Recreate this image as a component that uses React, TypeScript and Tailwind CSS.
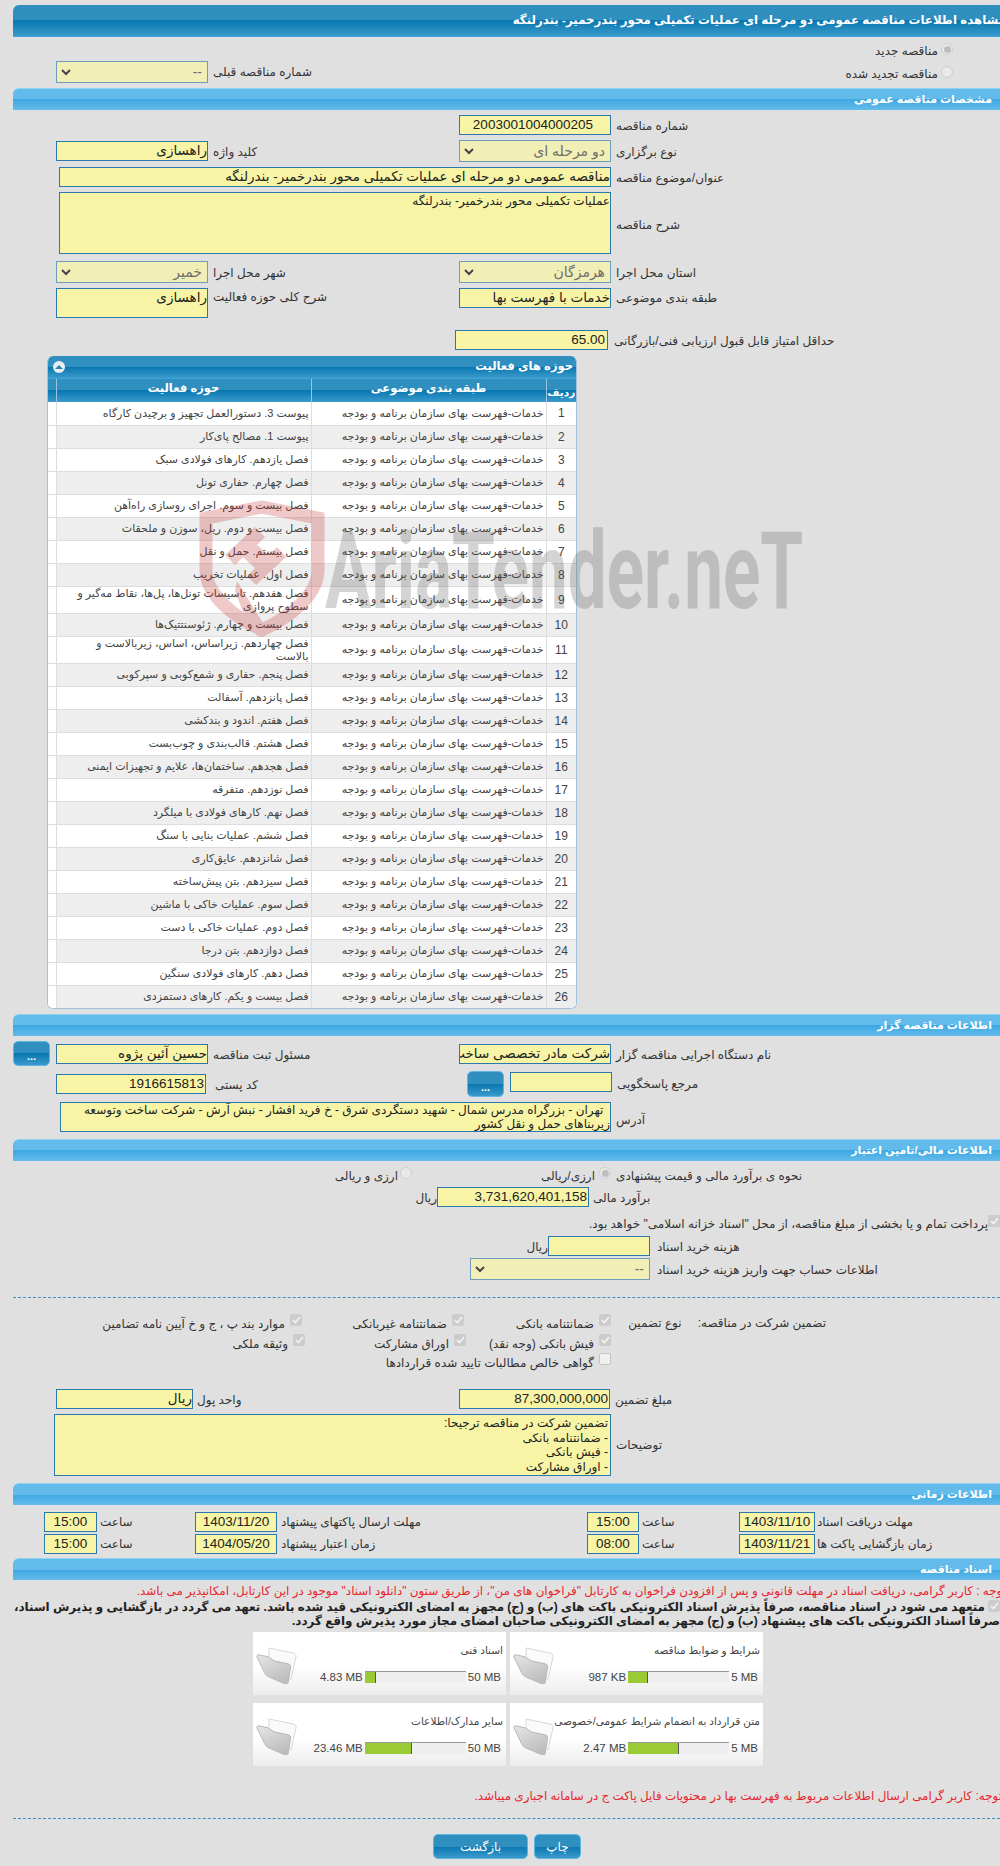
import type { ReactNode } from 'react'

const service = 'خدمات-فهرست بهای سازمان برنامه و بودجه'

const activities = [
  'پیوست 3. دستورالعمل تجهیز و برچیدن کارگاه',
  'پیوست 1. مصالح پای‌کار',
  'فصل یازدهم. کارهای فولادی سبک',
  'فصل چهارم. حفاری تونل',
  'فصل بیست و سوم. اجرای روسازی راه‌آهن',
  'فصل بیست و دوم. ریل، سوزن و ملحقات',
  'فصل بیستم. حمل و نقل',
  'فصل اول. عملیات تخریب',
  'فصل هفدهم. تاسیسات تونل‌ها، پل‌ها، نقاط مه‌گیر و سطوح پروازی',
  'فصل بیست و چهارم. ژئوسنتتیک‌ها',
  'فصل چهاردهم. زیراساس، اساس، زیربالاست  و بالاست',
  'فصل پنجم. حفاری و شمع‌کوبی و سپرکوبی',
  'فصل پانزدهم. آسفالت',
  'فصل هفتم. اندود و بندکشی',
  'فصل هشتم. قالب‌بندی و چوب‌بست',
  'فصل هجدهم. ساختمان‌ها، علایم و تجهیزات ایمنی',
  'فصل نوزدهم. متفرقه',
  'فصل نهم. کارهای فولادی با میلگرد',
  'فصل ششم. عملیات بنایی با سنگ',
  'فصل شانزدهم. عایق‌کاری',
  'فصل سیزدهم. بتن پیش‌ساخته',
  'فصل سوم. عملیات خاکی با ماشین',
  'فصل دوم. عملیات خاکی با دست',
  'فصل دوازدهم. بتن درجا',
  'فصل دهم. کارهای فولادی سنگین',
  'فصل بیست و یکم. کارهای دستمزدی',
]

const files = [
  { name: 'شرایط و ضوابط مناقصه', used: '987 KB', max: '5 MB', pct: 20 },
  { name: 'اسناد فنی', used: '4.83 MB', max: '50 MB', pct: 11 },
  { name: 'متن قرارداد به انضمام شرایط عمومی/خصوصی', used: '2.47 MB', max: '5 MB', pct: 50 },
  { name: 'سایر مدارک/اطلاعات', used: '23.46 MB', max: '50 MB', pct: 47 },
]

function DarkBar({ children, className = '' }: { children?: ReactNode; className?: string }) {
  return (
    <div className={`bg-[linear-gradient(#2f90bf_50%,#0877b0_50%,#3b9acb)] border-b border-[#3fa3dc] font-bold text-white ${className}`}>
      {children}
    </div>
  )
}

function SectionBar({ title, className = '' }: { title: string; className?: string }) {
  return (
    <div dir="rtl" className={`ml-[13px] flex h-[22px] items-center overflow-hidden rounded-tl-[6px] border-t border-[#8fd3f0] bg-[linear-gradient(#62bbea_50%,#3ea8e2_50%,#64bbea)] pr-[8px] text-[11px] font-bold text-white ${className}`}>
      {title}
    </div>
  )
}

function Box({ w, h = 20, children, t = 'whitespace-nowrap text-[13.500px] leading-[18px]', className = '' }: { w: number; h?: number; children?: ReactNode; t?: string; className?: string }) {
  return (
    <div dir="rtl" style={{ width: w, height: h }} className={`shrink-0 overflow-hidden border border-[#2a78ad] bg-[#f7f5a5] text-[#222] ${t} ${className}`}>
      {children}
    </div>
  )
}

function Pick({ w, value, className = '' }: { w: number; value: string; className?: string }) {
  return (
    <div style={{ width: w }} className={`flex h-[22px] shrink-0 items-center justify-between border border-[#6d9cbd] bg-[#f1efb5] pl-[4px] pr-[5px] text-[14px] text-[#6e6e6e] ${className}`}>
      <svg width="10" height="7" viewBox="0 0 10 7" fill="none" stroke="#444" strokeWidth="2">
        <path d="M1 1l4 4 4-4" />
      </svg>
      <span dir="rtl">{value}</span>
    </div>
  )
}

function Label({ children, className = '' }: { children: ReactNode; className?: string }) {
  return (
    <span dir="rtl" className={`whitespace-nowrap text-[12px] text-[#333] ${className}`}>
      {children}
    </span>
  )
}

function Radio({ on }: { on?: boolean }) {
  return (
    <span className="flex h-[12px] w-[12px] shrink-0 items-center justify-center rounded-full border border-[#cfcfcf] bg-[#e9e9e9]">
      {on && <span className="h-[7px] w-[7px] rounded-full bg-[#bdbdbd]" />}
    </span>
  )
}

function Check({ on = true }: { on?: boolean }) {
  return (
    <span className={`flex h-[12px] w-[12px] shrink-0 items-center justify-center rounded-[2px] ${on ? 'bg-[#cccccc]' : 'border border-[#c4c4c4] bg-[#f0f0f0]'}`}>
      {on && (
        <svg width="9" height="8" viewBox="0 0 9 8" fill="none" stroke="#f4f4f4" strokeWidth="1.6">
          <path d="M1 4l2.4 2.6L8 1" />
        </svg>
      )}
    </span>
  )
}

function CheckItem({ label, on, className = '' }: { label: string; on?: boolean; className?: string }) {
  return (
    <div className={`flex items-start gap-[5px] ${className}`}>
      <Check on={on} />
      <Label className="mt-[1px]">{label}</Label>
    </div>
  )
}

function DotsButton({ className = '' }: { className?: string }) {
  return (
    <DarkBar className={`flex w-[37px] items-end justify-center rounded-[5px] border border-[#5db5e6] pb-[3px] text-[11px] leading-none ${className}`}>...</DarkBar>
  )
}

function Folder() {
  return (
    <svg width="42" height="38" viewBox="0 0 42 38" className="mt-[-23px] shrink-0">
      <defs>
        <linearGradient id="flap" x1="0" y1="0" x2="0.6" y2="1">
          <stop offset="0" stopColor="#e6e6e6" />
          <stop offset="1" stopColor="#bdbdbd" />
        </linearGradient>
      </defs>
      <path d="M13 2l24 5c2.500.5 3.500 2 3 4l-5 22-22-10z" fill="#fafafa" stroke="#d8d8d8" />
      <path d="M1 11c-.5-1.500.5-2.500 2-2.200l9 2 6 4 14 3c2 .4 3 1.800 2.600 3.500l-2.400 15c-.3 1.600-1.500 2.200-3 1.700L13 31c-2-.7-3.500-2.500-4.500-4.500z" fill="url(#flap)" stroke="#b8b8b8" />
    </svg>
  )
}

function FileCard({ name, used, max, pct }: { name: string; used: string; max: string; pct: number }) {
  return (
    <div className="h-[63px] w-[253px] bg-[linear-gradient(#ffffff_55%,#ececec)] pl-[3px] pr-[3px] pt-[8px]">
      <div className="whitespace-nowrap text-[10.500px] leading-[20px] text-[#444]">{name}</div>
      <div className="mt-[9px] flex items-center pr-[2px]">
        <span dir="ltr" className="whitespace-nowrap text-[11.500px] leading-[12px] text-[#444]">{max}</span>
        <div dir="ltr" className="mx-[2px] h-[12px] w-[101px] shrink-0 border-t border-[#999] bg-[#eeeeee]">
          <div style={{ width: `${pct}%` }} className="h-full border-r border-[#555] bg-[#9acb34]" />
        </div>
        <span dir="ltr" className="whitespace-nowrap text-[11.500px] leading-[12px] text-[#444]">{used}</span>
        <div className="flex-1" />
        <Folder />
      </div>
    </div>
  )
}

function Watermark() {
  return (
    <div dir="ltr" className="pointer-events-none absolute left-[199px] top-[499px] flex">
      <svg width="126" height="140" viewBox="0 0 126 140" className="opacity-25">
        <path d="M7 19L63 8l56 11v52c0 26-30 48-56 60C37 119 7 97 7 71z" fill="none" stroke="#c22828" strokeWidth="13" />
        <path d="M26 56L56 28l10 10-8 8 12 10 8-8 9 10-30 28-9-9 8-8-12-11-8 8zM38 82l26 42-4 14-10-10-14-36z" fill="#c22828" />
      </svg>
      <span className="absolute left-[126px] top-[12px] origin-top-left scale-x-[.64] font-['Roboto',sans-serif] text-[108px] font-bold leading-[120px] text-[#555]/25">
        AriaTender.neT
      </span>
    </div>
  )
}

export default function App() {
  return (
    <div className="relative h-[1866px] w-[1000px] overflow-hidden bg-[#e0e0e0] font-['Liberation_Sans','DejaVu_Sans',sans-serif]">
      <DarkBar className="ml-[13px] mt-[5px] flex h-[32px] items-center overflow-hidden rounded-tl-[6px] text-[11.800px]">
        <div dir="rtl" className="-mr-[6px] ml-auto whitespace-nowrap">مشاهده اطلاعات مناقصه عمومی دو مرحله ای عملیات تکمیلی محور بندرخمیر- بندرلنگه</div>
      </DarkBar>

      <div className="h-[51px]" dir="ltr">
        <div className="flex h-[24px] items-start justify-start pl-[941px] pt-[6px]">
          <Radio on />
        </div>
        <div className="grid h-[27px] grid-cols-[459px_1fr]">
          <div className="flex items-start pl-[56px]">
            <Pick w={152} value="--" />
            <Label className="ml-[5px] mt-[2px]">شماره مناقصه قبلی</Label>
          </div>
          <div className="pl-[482px] pt-[5px]">
            <Radio />
          </div>
        </div>
      </div>
      <div className="absolute left-[700px] top-[38px] w-[238px] text-right"><Label>مناقصه جدید</Label></div>
      <div className="absolute left-[700px] top-[61px] w-[238px] text-right"><Label>مناقصه تجدید شده</Label></div>

      <SectionBar title="مشخصات مناقصه عمومی" />

      <div dir="ltr">
        <div className="mt-[5px] flex h-[20px] pl-[459px]">
          <Box w={152} className="pr-[17px]"><span dir="ltr">2003001004000205</span></Box>
          <Label className="ml-[5px] mt-[2px]">شماره مناقصه</Label>
        </div>
        <div className="mt-[5px] grid h-[22px] grid-cols-[459px_1fr]">
          <div className="flex pl-[56px] pt-[1px]">
            <Box w={152}>راهسازی</Box>
            <Label className="ml-[5px] mt-[2px]">کلید واژه</Label>
          </div>
          <div className="flex">
            <Pick w={152} value="دو مرحله ای" />
            <Label className="ml-[5px] mt-[3px]">نوع برگزاری</Label>
          </div>
        </div>
        <div className="mt-[5px] flex h-[20px] pl-[59px]">
          <Box w={552}>مناقصه عمومی دو مرحله ای عملیات تکمیلی محور بندرخمیر- بندرلنگه</Box>
          <Label className="ml-[5px] mt-[2px]">عنوان/موضوع مناقصه</Label>
        </div>
        <div className="mt-[5px] flex h-[62px] items-center pl-[59px]">
          <Box w={552} h={62} className="self-start" t="text-[12px] leading-[17px]">عملیات تکمیلی محور بندرخمیر- بندرلنگه</Box>
          <Label className="ml-[5px] mt-[4px]">شرح مناقصه</Label>
        </div>
        <div className="mt-[7px] grid h-[22px] grid-cols-[459px_1fr]">
          <div className="flex pl-[56px]">
            <Pick w={152} value="خمیر" />
            <Label className="ml-[5px] mt-[3px]">شهر محل اجرا</Label>
          </div>
          <div className="flex">
            <Pick w={152} value="هرمزگان" />
            <Label className="ml-[5px] mt-[3px]">استان محل اجرا</Label>
          </div>
        </div>
        <div className="mt-[5px] grid h-[30px] grid-cols-[459px_1fr]">
          <div className="flex pl-[56px]">
            <Box w={152} h={30}>راهسازی</Box>
            <Label className="ml-[5px]">شرح کلی حوزه فعالیت</Label>
          </div>
          <div className="flex">
            <Box w={152}>خدمات با فهرست بها</Box>
            <Label className="ml-[5px] mt-[1px]">طبقه بندی موضوعی</Label>
          </div>
        </div>
        <div className="mt-[12px] flex h-[20px] pl-[455px]">
          <Box w={153} className="pr-[2px]"><span dir="ltr">65.00</span></Box>
          <Label className="ml-[6px] mt-[2px]">حداقل امتیاز قابل قبول ارزیابی فنی/بازرگانی</Label>
        </div>
      </div>

      <div dir="rtl" className="ml-[47px] mt-[6px] h-[653px] w-[530px] overflow-hidden rounded-[6px] border-x border-b border-[#9cc4de] bg-white">
        <DarkBar className="flex h-[23px] items-center justify-between pl-[5px] pr-[3px] text-[11.500px]">
          <span>حوزه های فعالیت</span>
          <span className="flex h-[12px] w-[12px] items-center justify-center rounded-full bg-[#e8eef3]">
            <span className="h-0 w-0 border-x-[4px] border-b-[4px] border-x-transparent border-b-[#2f80ad]" />
          </span>
        </DarkBar>
        <table className="w-full table-fixed border-collapse text-[11px] text-[#444]">
          <thead>
            <tr className="h-[23px] bg-[linear-gradient(#2f90bf_50%,#0877b0_50%,#3b9acb)] font-bold text-white">
              <th className="w-[30px] whitespace-nowrap border-l border-[#9cc4de] pt-[4px] text-[10.500px] font-bold">ردیف</th>
              <th className="w-[235px] border-l border-[#9cc4de] pb-[3px] text-[11.500px] font-bold">طبقه بندی موضوعی</th>
              <th className="w-[255px] border-l border-[#9cc4de] pb-[3px] text-[11.500px] font-bold">حوزه فعالیت</th>
              <th />
            </tr>
          </thead>
          <tbody>
            {activities.map((a, i) => (
              <tr key={a} className={`border-b border-[#dddddd] ${i % 2 ? 'bg-[#eeeeee]' : 'bg-white'} ${i === 8 || i === 10 ? 'h-[27px]' : 'h-[23px]'}`}>
                <td className="border-l border-[#dddddd] text-center text-[12px]">{i + 1}</td>
                <td className="border-l border-[#dddddd] pr-[2px]">{service}</td>
                <td className="border-l border-[#dddddd] pl-[18px] pr-[2px] leading-[13px]">{a}</td>
                <td className="bg-white" />
              </tr>
            ))}
          </tbody>
        </table>
      </div>

      <SectionBar title="اطلاعات مناقصه گزار" className="mt-[5px]" />

      <div dir="ltr">
        <div className="mt-[5px] flex h-[25px] pl-[13px]">
          <DotsButton className="h-[25px]" />
          <div className="ml-[6px] mt-[3px] flex w-[403px]">
            <Box w={152}>حسین آئین پژوه</Box>
            <Label className="ml-[5px] mt-[2px]">مسئول ثبت مناقصه</Label>
          </div>
          <div className="mt-[3px] flex">
            <Box w={152}>شرکت مادر تخصصی ساخت و توسعه زیربناهای حمل و نقل کشور</Box>
            <Label className="ml-[5px] mt-[2px]">نام دستگاه اجرایی مناقصه گزار</Label>
          </div>
        </div>
        <div className="mt-[5px] flex h-[26px] pl-[56px]">
          <div className="mt-[3px] flex w-[411px]">
            <Box w={150}><span dir="ltr" className="pr-[1px]">1916615813</span></Box>
            <Label className="ml-[9px] mt-[2px]">کد پستی</Label>
          </div>
          <DotsButton className="h-[26px]" />
          <div className="ml-[6px] mt-[1px] flex">
            <Box w={102} />
            <Label className="ml-[5px] mt-[3px]">مرجع پاسخگویی</Label>
          </div>
        </div>
        <div className="mt-[5px] flex h-[30px] pl-[60px]">
          <Box w={551} h={30} t="whitespace-normal text-[12px] leading-[14px]">
            {'\u00a0\u00a0تهران - بزرگراه مدرس شمال -  شهید دستگردی شرق - خ فرید افشار -  نبش آرش - شرکت ساخت وتوسعه زیربناهای حمل و نقل کشور'}
          </Box>
          <Label className="ml-[5px] mt-[9px]">آدرس</Label>
        </div>
      </div>

      <SectionBar title="اطلاعات مالی/تامین اعتبار" className="mt-[7px]" />

      <div dir="ltr">
        <div className="mt-[6px] flex h-[14px] pl-[338px]">
          <Label className="w-[60px] text-right">ارزی و ریالی</Label>
          <span className="ml-[2px]"><Radio /></span>
          <Label className="ml-[130px] w-[53px] text-right">ارزی/ریالی</Label>
          <span className="ml-[4px]"><Radio on /></span>
          <Label className="ml-[5px]">نحوه ی برآورد مالی و قیمت پیشنهادی</Label>
        </div>
        <div className="mt-[6px] flex h-[20px] pl-[414px]">
          <Label className="mt-[2px] w-[23px]">ریال</Label>
          <Box w={152}><span dir="ltr" className="pr-[1px]">3,731,620,401,158</span></Box>
          <Label className="ml-[4px] mt-[2px]">برآورد مالی</Label>
        </div>
        <div dir="rtl" className="mt-[8px] flex h-[14px] items-start gap-0">
          <Check />
          <Label className="text-[12.200px]">پرداخت تمام و یا بخشی از مبلغ مناقصه، از محل &quot;اسناد خزانه اسلامی&quot; خواهد بود.</Label>
        </div>
        <div className="mt-[7px] flex h-[20px] pl-[529px]">
          <Label className="mt-[2px] w-[19px]">ریال</Label>
          <Box w={102} />
          <Label className="ml-[7px] mt-[2px]">هزینه خرید اسناد</Label>
        </div>
        <div className="mt-[2px] flex h-[22px] pl-[470px]">
          <Pick w={180} value="--" />
          <Label className="ml-[7px] mt-[3px]">اطلاعات حساب جهت واریز هزینه خرید اسناد</Label>
        </div>
      </div>

      <div className="ml-[13px] mt-[17px] border-t border-dashed border-[#3f8fc0]" />

      <div dir="rtl" className="mt-[16px] h-[57px]">
        <div className="grid h-[20px] grid-cols-[389px_147px_162px_1fr]">
          <div className="flex justify-start pr-[174px]">
            <Label>تضمین شرکت در مناقصه:</Label>
            <Label className="mr-[16px]">نوع تضمین</Label>
          </div>
          <CheckItem label="ضمانتنامه بانکی" />
          <CheckItem label="ضمانتنامه غیربانکی" />
          <CheckItem label="موارد بند پ ، ج و خ آیین نامه تضامین" />
        </div>
        <div className="grid h-[19px] grid-cols-[389px_145px_161px_1fr]">
          <div />
          <CheckItem label="فیش بانکی (وجه نقد)" />
          <CheckItem label="اوراق مشارکت" />
          <CheckItem label="وثیقه ملکی" />
        </div>
        <div className="grid h-[18px] grid-cols-[389px_1fr]">
          <div />
          <CheckItem label="گواهی خالص مطالبات تایید شده قراردادها" on={false} />
        </div>
      </div>

      <div dir="ltr">
        <div className="mt-[18px] flex h-[20px] pl-[56px]">
          <Box w={137}>ریال</Box>
          <Label className="ml-[4px] mt-[2px] w-[262px] text-left">واحد پول</Label>
          <Box w={151}><span dir="ltr" className="pr-[1px]">87,300,000,000</span></Box>
          <Label className="ml-[5px] mt-[2px]">مبلغ تضمین</Label>
        </div>
        <div className="mt-[5px] flex h-[62px] items-center pl-[54px]">
          <Box w={557} h={62} t="whitespace-pre-line pr-[2px] pt-[1px] text-[12px] leading-[14.500px]">
            {'تضمین شرکت در مناقصه ترجیحا:\n- ضمانتنامه بانکی\n- فیش بانکی\n- اوراق مشارکت'}
          </Box>
          <Label className="ml-[5px]">توضیحات</Label>
        </div>
      </div>

      <SectionBar title="اطلاعات زمانی" className="mt-[7px]" />

      <div dir="ltr">
        <div className="mt-[7px] flex h-[20px] pl-[44px]">
          <Box w={53} className="text-center"><span dir="ltr">15:00</span></Box>
          <Label className="ml-[3px] mt-[1px] w-[95px] text-left">ساعت</Label>
          <Box w={82} className="text-center"><span dir="ltr">1403/11/20</span></Box>
          <Label className="ml-[4px] mt-[1px] w-[306px] text-left">مهلت ارسال پاکتهای پیشنهاد</Label>
          <Box w={52} className="text-center"><span dir="ltr">15:00</span></Box>
          <Label className="ml-[3px] mt-[1px] w-[97px] text-left">ساعت</Label>
          <Box w={76} className="text-center"><span dir="ltr">1403/11/10</span></Box>
          <Label className="ml-[2px] mt-[1px]">مهلت دریافت اسناد</Label>
        </div>
        <div className="mt-[2px] flex h-[20px] pl-[44px]">
          <Box w={53} className="text-center"><span dir="ltr">15:00</span></Box>
          <Label className="ml-[3px] mt-[1px] w-[95px] text-left">ساعت</Label>
          <Box w={82} className="text-center"><span dir="ltr">1404/05/20</span></Box>
          <Label className="ml-[4px] mt-[1px] w-[306px] text-left">زمان اعتبار پیشنهاد</Label>
          <Box w={52} className="text-center"><span dir="ltr">08:00</span></Box>
          <Label className="ml-[3px] mt-[1px] w-[97px] text-left">ساعت</Label>
          <Box w={76} className="text-center"><span dir="ltr">1403/11/21</span></Box>
          <Label className="ml-[2px] mt-[1px]">زمان بازگشایی پاکت ها</Label>
        </div>
      </div>

      <SectionBar title="اسناد مناقصه" className="mt-[4px]" />

      <div dir="rtl" className="-mr-[6px] mt-[3px] h-[17px] whitespace-nowrap text-[11.900px] leading-[17px] text-[#e8262d]">
        توجه : کاربر گرامی، دریافت اسناد در مهلت قانونی و پس از افزودن فراخوان به کارتابل &quot;فراخوان های من&quot;، از طریق ستون &quot;دانلود اسناد&quot; موجود در این کارتابل، امکانپذیر می باشد.
      </div>
      <div dir="rtl" className="h-[29px] text-[11.900px] font-bold leading-[14px] text-[#222]">
        <div className="flex items-start whitespace-nowrap">
          <Check />
          <span className="mr-[3px]">متعهد می شود در اسناد مناقصه، صرفاً پذیرش اسناد الکترونیکی باکت های (ب) و (ج) مجهز به امضای الکترونیکی قید شده باشد. تعهد می گردد در بازگشایی و پذیرش اسناد،</span>
        </div>
        <div className="whitespace-nowrap">صرفاً اسناد الکترونیکی باکت های پیشنهاد (ب) و (ج) مجهز به امضای الکترونیکی صاحبان امضای مجاز مورد پذیرش واقع گردد.</div>
      </div>

      <div dir="rtl" className="ml-[253px] mt-[3px] grid w-[510px] grid-cols-2 gap-x-[4px] gap-y-[8px]">
        {files.map((f) => (
          <FileCard key={f.name} {...f} />
        ))}
      </div>

      <div dir="rtl" className="-mr-[2px] mt-[22px] h-[16px] whitespace-nowrap text-[11.900px] leading-[16px] text-[#e8262d]">
        توجه: کاربر گرامی ارسال اطلاعات مربوط به فهرست بها در محتویات فایل پاکت ج در سامانه اجباری میباشد.
      </div>

      <div className="ml-[13px] mt-[14px] border-t border-dashed border-[#3f8fc0]" />

      <div dir="ltr" className="mt-[15px] flex justify-start gap-[6px] pl-[433px]">
        <DarkBar className="flex h-[25px] w-[95px] items-center justify-center rounded-[5px] border border-[#5db5e6] text-[12px] font-normal">بازگشت</DarkBar>
        <DarkBar className="flex h-[25px] w-[47px] items-center justify-center rounded-[5px] border border-[#5db5e6] text-[12px] font-normal">چاپ</DarkBar>
      </div>

      <Watermark />
    </div>
  )
}
